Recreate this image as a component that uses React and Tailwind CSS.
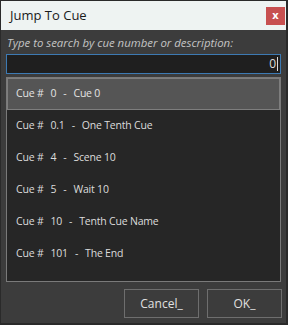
import React from "react";

const cues = [
  { n: "0", name: "Cue 0" },
  { n: "0.1", name: "One Tenth Cue" },
  { n: "4", name: "Scene 10" },
  { n: "5", name: "Wait 10" },
  { n: "10", name: "Tenth Cue Name" },
  { n: "101", name: "The End" },
];

export default function App() {
  return (
    <div
      className="w-[288px] h-[325px] bg-[#2a2a2a] pt-[1px] pl-[1px] pr-[2px] pb-[2px]"
      style={{ fontFamily: '"Open Sans", "Noto Sans", sans-serif' }}
    >
      <div className="w-full h-full flex flex-col bg-[#3c3c3c]">
        <div className="h-[29px] bg-[#eef3f2] flex items-center justify-between pl-[9px] pr-[1px]">
          <span className="text-[13px] text-[#1a1a1a]">Jump To Cue</span>
          <div className="w-[19px] h-[18px] bg-[#c75050] flex items-center justify-center text-white text-[11px] font-bold leading-none pb-[2px]">
            x
          </div>
        </div>
        <div className="flex-1 flex flex-col px-[5px] pt-[5px]">
          <div className="italic text-[11.4px] text-[#c4c4c4] leading-[16px] pl-[1px]">
            Type to search by cue number or description:
          </div>
          <div className="mt-[3px] h-[20px] border border-[#3d7ab3] bg-[#1f1f1f] flex items-center justify-end pr-[2px]">
            <span className="text-[12px] text-[#dcdcdc] leading-none">0</span>
            <span className="w-[1px] h-[14px] bg-[#dcdcdc] ml-[1px]"></span>
          </div>
          <div className="mt-[3px] h-[205px] border border-[#7a7a7a] bg-[#262626] flex flex-col">
            {cues.map((c, i) => (
              <div
                key={c.n}
                className={
                  i === 0
                    ? "h-[32px] flex items-center gap-[7px] pl-[8px] bg-[#555555] border border-[#7e7e7e] text-[10.5px] text-[#e4e4e4] tracking-[-0.2px]"
                    : "h-[32px] flex items-center gap-[7px] pl-[9px] text-[10.5px] text-[#dcdcdc] tracking-[-0.2px]"
                }
              >
                <span>Cue #</span>
                <span>{c.n}</span>
                <span>-</span>
                <span>{c.name}</span>
              </div>
            ))}
          </div>
          <div className="flex justify-end gap-[8px] mt-[7px] mr-[-1px]">
            <div className="w-[75px] h-[29px] border border-[#6e6e6e] flex items-center justify-center text-[12px] text-[#e0e0e0]">
              Cancel_
            </div>
            <div className="w-[75px] h-[29px] border border-[#6e6e6e] flex items-center justify-center text-[12px] text-[#e0e0e0]">
              OK_
            </div>
          </div>
        </div>
      </div>
    </div>
  );
}
